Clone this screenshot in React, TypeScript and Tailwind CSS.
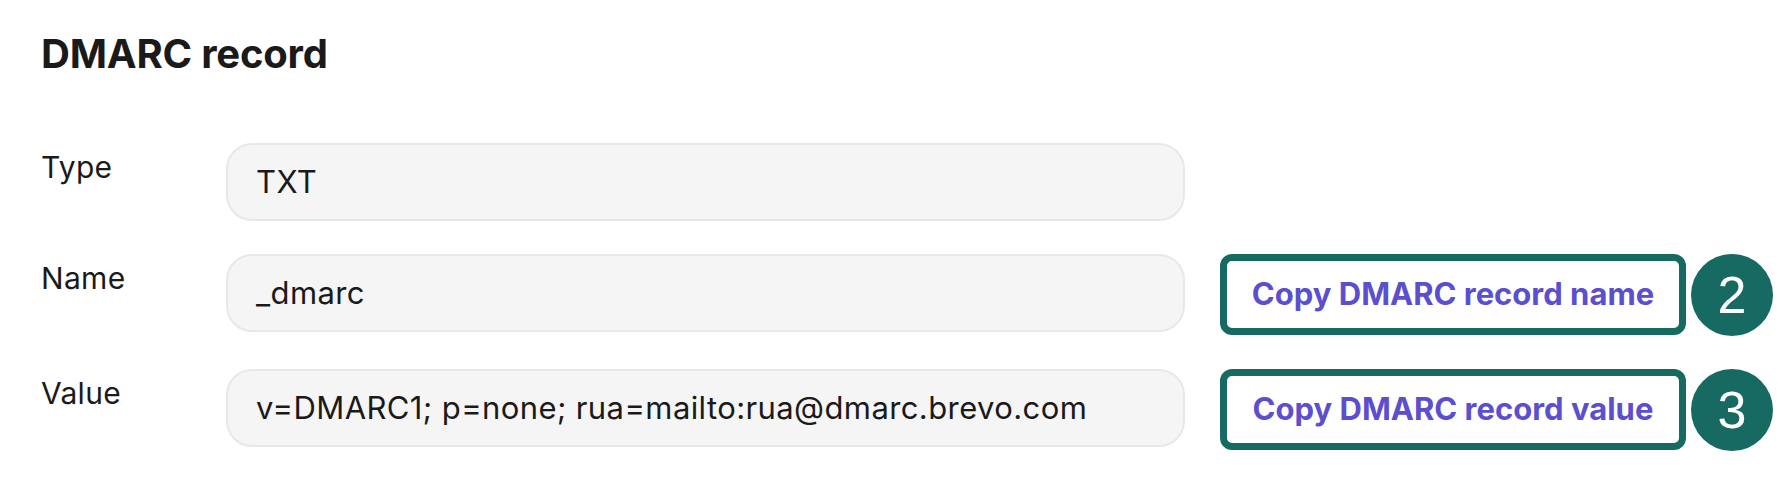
const rows = [
  { label: 'Type', value: 'TXT' },
  { label: 'Name', value: '_dmarc', copy: 'Copy DMARC record name', step: '2' },
  { label: 'Value', value: 'v=DMARC1; p=none; rua=mailto:rua@dmarc.brevo.com', copy: 'Copy DMARC record value', step: '3' },
];

const App = () => {
  return (
    <div className="h-[480px] w-[1778px] bg-white pl-[41px] pt-[28px] font-['Inter',sans-serif] text-[#1a1a1a]">
      <h2 className="text-[40px] font-bold leading-[52px] tracking-[-0.2px]">DMARC record</h2>
      <div className="mt-[63px] flex flex-col gap-[33px]">
        {rows.map((row) => (
          <div key={row.label} className="flex items-start">
            <div className="w-[185px] pt-[2px] text-[30px] leading-[45px] tracking-[0.3px]">{row.label}</div>
            <div className="flex h-[78px] w-[959px] items-center rounded-[26px] border-2 border-[#e8e8e8] bg-[#f5f5f5] pl-[28px] text-[31px] tracking-[0.4px]">
              {row.value}
            </div>
            {row.copy && (
              <div className="ml-[35px] flex items-center gap-[5px]">
                <button className="-mt-px flex h-[81px] w-[466px] items-center justify-center rounded-[12px] border-[7px] border-[#166a62] bg-white text-[31px] font-bold text-[#5b4fd0]">
                  {row.copy}
                </button>
                <div className="flex h-[82px] w-[82px] items-center justify-center rounded-full bg-[#166a62] font-['Liberation_Sans',sans-serif] text-[52px] text-white">
                  {row.step}
                </div>
              </div>
            )}
          </div>
        ))}
      </div>
    </div>
  );
};

export default App;
